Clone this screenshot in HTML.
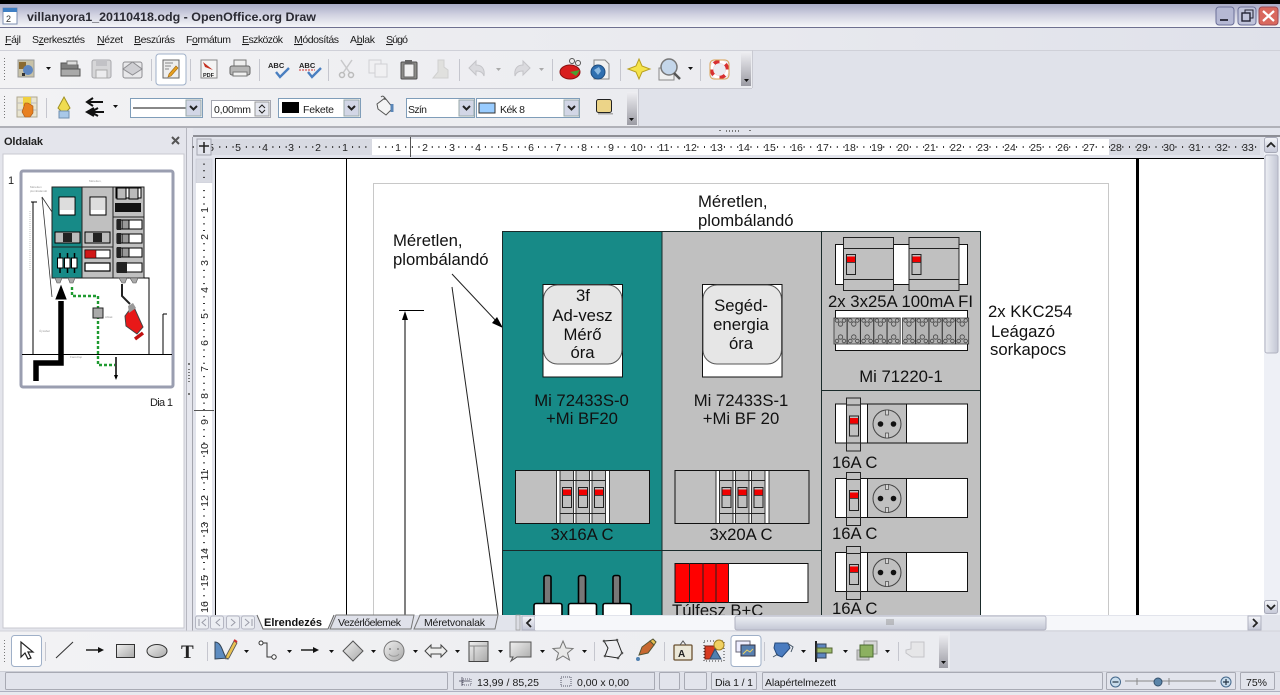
<!DOCTYPE html>
<html lang="hu">
<head>
<meta charset="utf-8">
<title>villanyora1_20110418.odg - OpenOffice.org Draw</title>
<style>
html,body{margin:0;padding:0;background:#e0e2ea;width:1280px;height:695px;overflow:hidden}
svg{display:block;position:absolute;left:0;top:0;filter:blur(.35px)}
text{font-family:"Liberation Sans",sans-serif}
.ui{font-size:10.5px;fill:#1a1a1a}
.r{font-size:10.5px;fill:#222;text-anchor:middle}
.d{font-size:16.7px;fill:#111}
.m{text-anchor:middle}
</style>
</head>
<body>
<svg width="1280" height="695" viewBox="0 0 1280 695" xmlns="http://www.w3.org/2000/svg">
<defs>
<linearGradient id="tb" x1="0" y1="0" x2="0" y2="1"><stop offset="0" stop-color="#a8aac6"/><stop offset=".45" stop-color="#cfd0e0"/><stop offset="1" stop-color="#f6f6f9"/></linearGradient>
<linearGradient id="mn" x1="0" y1="0" x2="1" y2="0"><stop offset="0" stop-color="#f1f1f3"/><stop offset=".6" stop-color="#e8e9ee"/><stop offset="1" stop-color="#dfe1ea"/></linearGradient>
<linearGradient id="tl" x1="0" y1="0" x2="1" y2="0"><stop offset="0" stop-color="#f2f2f4"/><stop offset="1" stop-color="#ebecf0"/></linearGradient>
<linearGradient id="grip" x1="0" y1="0" x2="0" y2="1"><stop offset="0" stop-color="#eeeef2"/><stop offset="1" stop-color="#9c9ca4"/></linearGradient>
<linearGradient id="btn" x1="0" y1="0" x2="0" y2="1"><stop offset="0" stop-color="#f4f5f9"/><stop offset="1" stop-color="#c4c7d6"/></linearGradient>
<linearGradient id="sc" x1="0" y1="0" x2="0" y2="1"><stop offset="0" stop-color="#eef0f5"/><stop offset="1" stop-color="#c3c6d4"/></linearGradient>
<linearGradient id="scv" x1="0" y1="0" x2="1" y2="0"><stop offset="0" stop-color="#eef0f5"/><stop offset="1" stop-color="#c3c6d4"/></linearGradient>
<linearGradient id="gr" x1="0" y1="0" x2="1" y2="1"><stop offset="0" stop-color="#f0f0f0"/><stop offset="1" stop-color="#a8a8a8"/></linearGradient>
<clipPath id="cv"><rect x="216" y="159" width="1048" height="456"/></clipPath>
<g id="dd"><path d="M0 0h5l-2.5 3z" fill="#111"/></g>
<g id="ddg"><path d="M0 0h5l-2.5 3z" fill="#aaa"/></g>
<g id="hdl" fill="#777"><rect y="0" width="1" height="1"/><rect y="3" width="1" height="1"/><rect y="6" width="1" height="1"/><rect y="9" width="1" height="1"/><rect y="12" width="1" height="1"/><rect y="15" width="1" height="1"/><rect y="18" width="1" height="1"/><rect y="21" width="1" height="1"/></g>
<g id="module">
 <rect x="0" y="0" width="13" height="26" fill="#b4b4b4" stroke="#333" stroke-width=".8"/>
 <g fill="none" stroke="#444" stroke-width=".8"><circle cx="6.5" cy="6" r="2.2"/><circle cx="3" cy="2.5" r="1.8"/><circle cx="10" cy="2.5" r="1.8"/><circle cx="6.5" cy="19" r="2.2"/><circle cx="3" cy="23" r="1.8"/><circle cx="10" cy="23" r="1.8"/></g>
</g>
<g id="sw">
 <rect x="0" y="0" width="9" height="20" fill="#c0c0c0" stroke="#222" stroke-width="1"/>
 <rect x=".5" y="2" width="8" height="5.5" fill="#f00000"/>
 <line x1="0" y1="8" x2="9" y2="8" stroke="#222" stroke-width=".8"/>
</g>
<g id="brk3">
 <rect x="0" y="0" width="134" height="53" fill="#c0c0c0" stroke="#111" stroke-width="1"/>
 <rect x="41.5" y=".5" width="3" height="52" fill="#fff"/>
 <rect x="58" y=".5" width="2.5" height="52" fill="#fff"/>
 <rect x="74" y=".5" width="2.5" height="52" fill="#fff"/>
 <rect x="90" y=".5" width="4" height="52" fill="#fff"/>
 <g stroke="#222" stroke-width=".9">
  <line x1="41" y1="0" x2="41" y2="53"/><line x1="44.5" y1="0" x2="44.5" y2="53"/><line x1="58" y1="0" x2="58" y2="53"/><line x1="60.5" y1="0" x2="60.5" y2="53"/><line x1="74" y1="0" x2="74" y2="53"/><line x1="76.5" y1="0" x2="76.5" y2="53"/><line x1="90" y1="0" x2="90" y2="53"/><line x1="94" y1="0" x2="94" y2="53"/>
  <line x1="45" y1="10" x2="90" y2="10"/><line x1="45" y1="43" x2="90" y2="43"/>
 </g>
 <use href="#sw" x="47" y="17"/><use href="#sw" x="63" y="17"/><use href="#sw" x="79" y="17"/>
</g>
<g id="sock">
 <rect x="0" y="0" width="132" height="39" fill="#fff" stroke="#111" stroke-width="1"/>
 <rect x="32" y=".5" width="39" height="38" fill="#c0c0c0"/>
 <line x1="32" y1="0" x2="32" y2="39" stroke="#111"/><line x1="71" y1="0" x2="71" y2="39" stroke="#111"/>
 <circle cx="51.5" cy="20" r="14" fill="none" stroke="#444" stroke-width="1"/>
 <circle cx="45" cy="20" r="2.8" fill="#111"/><circle cx="58" cy="20" r="2.8" fill="#111"/>
 <rect x="50" y="6" width="3" height="5" fill="#d4d4d4" stroke="#444" stroke-width=".7"/><rect x="50" y="29" width="3" height="5" fill="#d4d4d4" stroke="#444" stroke-width=".7"/>
 <rect x="11" y="-6" width="14" height="53" fill="#c0c0c0" stroke="#222" stroke-width="1"/>
 <line x1="11" y1="1" x2="25" y2="1" stroke="#222"/><line x1="11" y1="39" x2="25" y2="39" stroke="#222"/>
 <use href="#sw" x="14" y="12"/>
</g>
<g id="fuse">
 <rect x="10" y="0" width="7" height="30" rx="2" fill="#777" stroke="#000" stroke-width="1.6"/>
 <rect x="0" y="28" width="28" height="50" rx="2" fill="#fff" stroke="#000" stroke-width="1.6"/>
</g>
<g id="rbrk">
 <rect x="0" y="0" width="50" height="53" fill="#c0c0c0" stroke="#222" stroke-width="1"/>
 <line x1="0" y1="11" x2="50" y2="11" stroke="#222"/><line x1="0" y1="42" x2="50" y2="42" stroke="#222"/>
 <use href="#sw" x="3" y="17"/>
</g>
<g id="tbtn"><rect width="30" height="31" rx="3" fill="#fff" stroke="#9fb0c8" stroke-width="1"/></g>
<g id="navb"><rect width="13" height="13" rx="2" fill="#eceef3" stroke="#b4b6c2"/></g>
</defs>

<!-- base -->
<rect width="1280" height="695" fill="#e0e2ea"/>
<rect width="1280" height="4" fill="#000"/>
<!-- title bar -->
<rect y="4" width="1280" height="23" fill="url(#tb)"/>
<rect y="27" width="1280" height="1" fill="#6e7090"/>
<rect x="3" y="8" width="14" height="16" fill="#fff" stroke="#7d8fb0"/><rect x="3" y="8" width="14" height="4" fill="#3f7fc4"/>
<text x="6" y="22" font-size="9" fill="#333">2</text>
<text x="27" y="21" font-size="12" font-weight="bold" fill="#2a2a33" textLength="289" lengthAdjust="spacingAndGlyphs">villanyora1_20110418.odg - OpenOffice.org Draw</text>
<!-- window buttons -->
<rect x="1216" y="7" width="18" height="18" rx="3" fill="#b5b8d4" stroke="#6c7099"/><rect x="1220" y="19" width="8" height="2" fill="#334"/>
<rect x="1238" y="7" width="18" height="18" rx="3" fill="#c0c3da" stroke="#6c7099"/><rect x="1245" y="10" width="8" height="8" fill="none" stroke="#223"/><rect x="1242" y="13" width="8" height="8" fill="#c0c3da" stroke="#223" stroke-width="1.4"/>
<rect x="1259" y="7" width="19" height="18" rx="3" fill="#d9685e" stroke="#9c4a55"/><path d="M1263 11l11 10M1274 11l-11 10" stroke="#fff" stroke-width="2.2"/>
<!-- menu -->
<rect y="28" width="1280" height="22" fill="url(#mn)"/>
<g class="ui">
<text class="ui" x="5" y="43" textLength="16"><tspan text-decoration="underline">F</tspan>ájl</text>
<text class="ui" x="32" y="43" textLength="53">S<tspan text-decoration="underline">z</tspan>erkesztés</text>
<text class="ui" x="97" y="43" textLength="26"><tspan text-decoration="underline">N</tspan>ézet</text>
<text class="ui" x="134" y="43" textLength="41"><tspan text-decoration="underline">B</tspan>eszúrás</text>
<text class="ui" x="186" y="43" textLength="45">F<tspan text-decoration="underline">o</tspan>rmátum</text>
<text class="ui" x="242" y="43" textLength="41"><tspan text-decoration="underline">E</tspan>szközök</text>
<text class="ui" x="294" y="43" textLength="45"><tspan text-decoration="underline">M</tspan>ódosítás</text>
<text class="ui" x="350" y="43" textLength="25">A<tspan text-decoration="underline">b</tspan>lak</text>
<text class="ui" x="386" y="43" textLength="22"><tspan text-decoration="underline">S</tspan>úgó</text>
</g>
<!-- toolbar 1 -->
<rect y="50" width="752" height="38" fill="url(#tl)"/>
<rect y="50" width="1280" height="1" fill="#cfd0d8"/>
<rect y="88" width="752" height="1" fill="#c9cad2"/>
<rect x="752" y="50" width="1" height="38" fill="#c9cad2"/>
<use href="#hdl" x="4" y="58"/>
<!-- new -->
<rect x="18" y="60" width="16" height="17" fill="#c8c2a8" stroke="#999"/><rect x="19" y="62" width="7" height="7" fill="#8a6a30"/><circle cx="28" cy="70" r="5" fill="#5d86c0"/><rect x="22" y="73" width="3" height="3" fill="#333"/>
<use href="#dd" x="46" y="67"/>
<!-- open -->
<path d="M61 75V63h7l2 2h8v10z" fill="#7f7f7f" stroke="#555"/><rect x="61" y="69" width="19" height="7" fill="#a9a9a9" stroke="#555"/><rect x="67" y="61" width="10" height="4" fill="#ddd" stroke="#777"/>
<!-- save -->
<rect x="92" y="60" width="19" height="18" rx="2" fill="#d6d6d8" stroke="#a8a8ac"/><rect x="96" y="70" width="11" height="8" fill="#ececee" stroke="#aaa"/><rect x="96" y="60" width="11" height="6" fill="#c2c2c6"/>
<!-- mail -->
<rect x="123" y="62" width="19" height="16" rx="2" fill="#e8e8ea" stroke="#8e8e92"/><path d="M123 69l9.500-7 9.500 7-9.500 6z" fill="#cfcfd3" stroke="#8e8e92"/>
<rect x="151" y="59" width="1" height="22" fill="#c5c6ce"/>
<use href="#tbtn" x="156" y="54"/>
<rect x="163" y="60" width="16" height="18" fill="#eee" stroke="#666"/><path d="M165 63h8M165 66h6M165 69h4" stroke="#888"/><path d="M169 74l7-8 2 2-7 8-3 1z" fill="#e8a020" stroke="#a06a10" stroke-width=".6"/>
<rect x="190" y="59" width="1" height="22" fill="#c5c6ce"/>
<!-- pdf -->
<rect x="201" y="60" width="16" height="18" fill="#f4f4f4" stroke="#888"/><path d="M203 62l10 8-8-3z" fill="#c43020"/><text x="203" y="77" font-size="5.500" font-weight="bold" fill="#222">PDF</text>
<!-- print -->
<rect x="234" y="60" width="12" height="7" fill="#eee" stroke="#777"/><rect x="230" y="66" width="20" height="9" rx="2" fill="#b5b5b5" stroke="#666"/><rect x="233" y="72" width="14" height="4" fill="#f0f0f0" stroke="#777"/>
<rect x="259" y="59" width="1" height="22" fill="#c5c6ce"/>
<!-- spell -->
<text x="268" y="68" font-size="7.500" font-weight="bold" fill="#222">ABC</text><path d="M276 72l4 5 9-9" fill="none" stroke="#4a7fc0" stroke-width="2.400"/>
<text x="299" y="68" font-size="7.500" font-weight="bold" fill="#222">ABC</text><path d="M299 70h16" stroke="#d03030" stroke-dasharray="2 1"/><path d="M308 72l4 5 9-9" fill="none" stroke="#4a7fc0" stroke-width="2.400"/>
<rect x="328" y="59" width="1" height="22" fill="#c5c6ce"/>
<!-- cut -->
<path d="M352 60l-9 13M341 60l9 13" stroke="#c8c8ca" stroke-width="1.500"/><circle cx="342" cy="75" r="2.500" fill="none" stroke="#bbb" stroke-width="1.500"/><circle cx="351" cy="75" r="2.500" fill="none" stroke="#bbb" stroke-width="1.500"/>
<!-- copy -->
<rect x="369" y="60" width="12" height="13" fill="#f0f0f2" stroke="#d0d0d4"/><rect x="375" y="64" width="12" height="13" fill="#f0f0f2" stroke="#d0d0d4"/>
<!-- paste -->
<rect x="401" y="62" width="16" height="17" rx="1" fill="#8c8c88" stroke="#4e4e4e"/><rect x="404" y="64" width="10" height="13" fill="#f0f0f0" stroke="#666"/><rect x="405" y="60" width="7" height="4" fill="#666"/>
<!-- brush -->
<path d="M438 60h6v7l4 3v8h-15l5-6z" fill="#e0e0de" stroke="#d0d0d0"/>
<rect x="459" y="59" width="1" height="22" fill="#c5c6ce"/>
<!-- undo redo -->
<path d="M469 68l7-7v4c6 0 9 4 8 11-1-4-4-5-8-5v4z" fill="#dadade" stroke="#c4c4c8"/>
<use href="#ddg" x="496" y="68"/>
<path d="M530 68l-7-7v4c-6 0-9 4-8 11 1-4 4-5 8-5v4z" fill="#dadade" stroke="#c4c4c8"/>
<use href="#ddg" x="539" y="68"/>
<rect x="552" y="59" width="1" height="22" fill="#c5c6ce"/>
<!-- chart -->
<ellipse cx="570" cy="72" rx="10" ry="7" fill="#d81e1e" stroke="#8a1010"/><path d="M570 72l10-2-4 6z" fill="#4aa030"/><circle cx="572" cy="61" r="2.500" fill="#eee" stroke="#555"/><circle cx="578" cy="63" r="2.500" fill="#eee" stroke="#555"/>
<!-- globe page -->
<path d="M594 60h11l4 4v15h-15z" fill="#f0f0f0" stroke="#888"/><circle cx="598" cy="72" r="7" fill="#2f6fb0" stroke="#1c4a7c"/><path d="M594 70l5-3 2 4-3 4z" fill="#8ab8e0"/>
<rect x="620" y="59" width="1" height="22" fill="#c5c6ce"/>
<!-- star -->
<path d="M639 59l3 7 8 3-8 3-3 7-3-7-8-3 8-3z" fill="#f5e34a" stroke="#b8a020"/>
<!-- find -->
<rect x="659" y="68" width="15" height="12" fill="#f0f0f0" stroke="#888"/><circle cx="669" cy="67" r="8" fill="#c4d6ea" stroke="#777" stroke-width="1.500"/><path d="M674 73l6 6" stroke="#555" stroke-width="2.500"/>
<use href="#dd" x="688" y="67"/>
<rect x="700" y="59" width="1" height="22" fill="#c5c6ce"/>
<!-- help -->
<circle cx="719.500" cy="69.500" r="8" fill="none" stroke="#d83030" stroke-width="3.500"/><circle cx="719.500" cy="69.500" r="8" fill="none" stroke="#fff" stroke-width="3.500" stroke-dasharray="6.500 6"/><rect x="710" y="60" width="19" height="19" rx="4" fill="none" stroke="#d8a050"/>
<rect x="741" y="52" width="10" height="34" fill="url(#grip)"/><path d="M744 79h5l-2.500 3z" fill="#111"/>
<!-- toolbar 2 -->
<rect y="89" width="638" height="37" fill="url(#tl)"/>
<rect x="638" y="89" width="1" height="37" fill="#c9cad2"/>
<use href="#hdl" x="4" y="96"/>
<rect x="17" y="97" width="20" height="20" fill="#e8e4d0" stroke="#b0a890"/><path d="M17 103h20M17 110h20M24 97v20M31 97v20" stroke="#bbb"/><rect x="23" y="97" width="8" height="9" fill="#f0d040"/><path d="M25 103h3l5 3v7l-3 4h-5l-3-5z" fill="#e88020" stroke="#a05010" stroke-width=".6"/>
<rect x="46" y="98" width="1" height="20" fill="#c5c6ce"/>
<path d="M64 97l6 11-3 3h-6l-3-3z" fill="#f0dc50" stroke="#a09020"/><rect x="59" y="111" width="10" height="7" fill="#a8c8e8" stroke="#7090b0"/>
<path d="M103 102H88m5-4l-6 4 6 4" fill="none" stroke="#111" stroke-width="2"/><path d="M104 112H88m6-4l-7 4 7 4m4-8l-7 4 7 4" fill="none" stroke="#111" stroke-width="2"/>
<use href="#dd" x="113" y="105"/>
<rect x="130.500" y="98.500" width="72" height="19" fill="#fff" stroke="#7f9db9"/><line x1="133" y1="108" x2="186" y2="108" stroke="#111"/><rect x="186" y="100" width="15" height="16" fill="#d2d6e6" stroke="#9aa"/><path d="M190 106l3.500 3.500 3.500-3.500" fill="none" stroke="#222" stroke-width="2"/>
<rect x="211.500" y="100.500" width="59" height="17" fill="#fff" stroke="#a4a6b0"/><text class="ui" x="214" y="113" textLength="37">0,00mm</text><rect x="255" y="102" width="14" height="14" fill="#e4e6ee" stroke="#999"/><path d="M259 108l3-3 3 3M259 110l3 3 3-3" fill="none" stroke="#222"/>
<rect x="278.500" y="98.500" width="82" height="19" fill="#fff" stroke="#7f9db9"/><rect x="282" y="102" width="17" height="11" fill="#000"/><text class="ui" x="303" y="113" textLength="31">Fekete</text><rect x="344" y="100" width="15" height="16" fill="#d2d6e6" stroke="#9aa"/><path d="M348 106l3.500 3.500 3.500-3.500" fill="none" stroke="#222" stroke-width="2"/>
<!-- bucket -->
<path d="M377 104l8-6 8 10-7 7-8-6z" fill="#f4f4f4" stroke="#555"/><path d="M392 104v8" stroke="#5a86b8" stroke-width="3"/><path d="M381 97c2-2 4 0 4 3" fill="none" stroke="#555"/>
<rect x="406.500" y="98.500" width="68" height="19" fill="#fff" stroke="#7f9db9"/><text class="ui" x="408" y="113" textLength="19">Szín</text><rect x="459" y="100" width="15" height="16" fill="#d2d6e6" stroke="#9aa"/><path d="M463 106l3.500 3.500 3.500-3.500" fill="none" stroke="#222" stroke-width="2"/>
<rect x="476.500" y="98.500" width="103" height="19" fill="#fff" stroke="#7f9db9"/><rect x="479" y="103" width="16" height="10" fill="#99ccff" stroke="#333"/><text class="ui" x="500" y="113" textLength="25">Kék 8</text><rect x="564" y="100" width="15" height="16" fill="#d2d6e6" stroke="#9aa"/><path d="M568 106l3.500 3.500 3.500-3.500" fill="none" stroke="#222" stroke-width="2"/>
<rect x="596.500" y="99.500" width="15" height="13" rx="2" fill="#ecd488" stroke="#222"/><rect x="598" y="113" width="15" height="1.500" fill="#aaa"/>
<rect x="627" y="92" width="10" height="33" fill="url(#grip)"/><path d="M629 118h5l-2.500 3z" fill="#111"/>
<!-- separator -->
<rect y="126" width="1280" height="2" fill="#b0b1b8"/>
<rect y="128" width="1280" height="7" fill="#e2e4ec"/>
<rect y="135" width="1280" height="2" fill="#8e8f96"/>
<g fill="#777"><rect x="719" y="130" width="2" height="1"/><rect x="726" y="130" width="1" height="2"/><rect x="729" y="130" width="1" height="2"/><rect x="732" y="130" width="1" height="2"/><rect x="735" y="130" width="1" height="2"/><rect x="738" y="130" width="1" height="2"/><rect x="749" y="130" width="2" height="1"/></g>

<!-- sidebar -->
<rect x="0" y="128" width="186" height="503" fill="#e4e5ec"/>
<text x="4" y="145" font-size="11" font-weight="bold" fill="#222" textLength="39">Oldalak</text>
<path d="M172 137l7 7M179 137l-7 7" stroke="#555" stroke-width="2"/>
<rect x="3" y="154" width="181" height="474" fill="#fff" stroke="#c8c9d0"/>
<text x="8" y="184" font-size="11" fill="#222">1</text>
<rect x="21" y="171" width="152" height="216" rx="2" fill="#fff" stroke="#9a9eb0" stroke-width="3"/>
<!-- thumbnail -->
<g>
<rect x="52" y="187" width="30" height="91" fill="#178a87" stroke="#222"/>
<rect x="82" y="187" width="31" height="91" fill="#c0c0c0" stroke="#222"/>
<rect x="113" y="187" width="31" height="91" fill="#c0c0c0" stroke="#222"/>
<path d="M52 247h61M113 217h31" stroke="#222"/>
<rect x="59" y="197" width="16" height="18" fill="#fff" stroke="#000"/><rect x="60" y="198" width="14" height="12" fill="#ddd"/>
<rect x="90" y="197" width="16" height="18" fill="#fff" stroke="#000"/><rect x="91" y="198" width="14" height="12" fill="#ddd"/>
<rect x="55" y="232" width="25" height="11" fill="#bbb" stroke="#000"/><rect x="63" y="233" width="9" height="9" fill="#222"/>
<rect x="85" y="232" width="25" height="11" fill="#bbb" stroke="#000"/><rect x="93" y="233" width="9" height="9" fill="#222"/>
<path d="M60 253v20M67.500 253v20M74.500 253v20" stroke="#000" stroke-width="1.500"/>
<g fill="#fff" stroke="#000"><rect x="57.500" y="258" width="5.500" height="10"/><rect x="64.500" y="258" width="5.500" height="10"/><rect x="71.500" y="258" width="5.500" height="10"/></g>
<rect x="85" y="250" width="25" height="8" fill="#fff" stroke="#000"/><rect x="85" y="250" width="11" height="8" fill="#d01818" stroke="#000" stroke-width=".5"/>
<rect x="85" y="263" width="25" height="8" fill="#fff" stroke="#000" stroke-width="1.200"/>
<rect x="116" y="188" width="25" height="10" fill="#fff" stroke="#000"/><rect x="117" y="188" width="9" height="11" fill="#bbb" stroke="#000"/><rect x="129" y="188" width="9" height="11" fill="#bbb" stroke="#000"/>
<rect x="115" y="203" width="26" height="9" fill="#111"/>
<g id="trow"><rect x="117" y="220" width="25" height="9" fill="#fff" stroke="#000"/><rect x="117" y="219" width="4" height="11" fill="#222"/><rect x="122" y="220" width="7" height="9" fill="#999" stroke="#000"/></g>
<use href="#trow" y="14"/><use href="#trow" y="28"/>
<rect x="117" y="263" width="25" height="9" fill="#fff" stroke="#000"/><rect x="117" y="262" width="10" height="11" fill="#222"/>
<path d="M55 278h7l-2 5h-3zM68 278h7l-2 5h-3zM119 278h8l-2 5h-3zM130 278h8l-2 5h-3z" fill="#aaa" stroke="#555" stroke-width=".6"/>
<path d="M144 278h5v76M33 202v152M22 354.500h150M163 314v40M163 314h4M31 202h6" fill="none" stroke="#000"/>
<path d="M42 197l10 15M42 197l10 100" stroke="#333" stroke-width=".8" fill="none"/>
<path d="M36 381v-18h25v-62" fill="none" stroke="#000" stroke-width="5.500"/><path d="M61 286l-5 13h10z" fill="#000" stroke="#000"/>
<path d="M72 287v9h26v69h17" fill="none" stroke="#1f9a30" stroke-width="2.400" stroke-dasharray="3 2"/>
<rect x="93" y="308" width="10" height="10" fill="#aaa" stroke="#222"/>
<path d="M116 357v21" stroke="#000" stroke-width="1.500"/><path d="M114 375h4l-2 5z" fill="#000"/>
<path d="M122 284v12l8 8" fill="none" stroke="#222" stroke-width="2"/>
<path d="M125 316l8-11 10 22-6 7-11-8z" fill="#e81818" stroke="#444"/><path d="M128 306l5-3 3 5-7 5z" fill="#999"/><path d="M135 339l8-6" stroke="#c01010" stroke-width="3.500"/>
<g fill="#999" font-size="3"><text x="30" y="188">Méretlen</text><text x="30" y="192">plombálandó</text><text x="89" y="182">Méretlen,</text><text x="39" y="332">Új kábel</text><text x="70" y="358">Faoszlop</text><text x="105" y="318">Ablak</text></g>
<path d="M31 270v-60" stroke="#bbb" stroke-dasharray="1 1" transform="translate(-1,0)"/>
</g>
<text x="150" y="406" font-size="11" fill="#222" textLength="23">Dia 1</text>
<!-- splitter -->
<rect x="186" y="128" width="7" height="503" fill="#e6e7ee"/>
<rect x="186" y="128" width="1" height="503" fill="#b6b7c0"/><rect x="192" y="137" width="1" height="494" fill="#a4a5ae"/>
<g fill="#777"><rect x="188" y="363" width="2" height="2"/><rect x="188" y="369" width="2" height="1"/><rect x="188" y="372" width="2" height="1"/><rect x="188" y="375" width="2" height="1"/><rect x="188" y="378" width="2" height="1"/><rect x="188" y="381" width="2" height="1"/><rect x="188" y="393" width="2" height="2"/></g>

<!-- drawing area base -->
<rect x="193" y="137" width="1087" height="494" fill="#e2e4ec"/>
<rect x="216" y="158" width="1048" height="457" fill="#fff"/>

<!-- hor ruler -->
<rect x="205" y="139" width="167" height="16" fill="#d8dae2"/><rect x="372" y="139" width="737" height="16" fill="#fff"/><rect x="1109" y="139" width="151" height="16" fill="#d8dae2"/>
<line x1="192.720" y1="147" x2="1260" y2="147" stroke="#333" stroke-width="2" stroke-dasharray="1 5.640 1 5.640 1 12.280"/>
<g>
<text class="r" x="211" y="151">5</text><text class="r" x="238" y="151">5</text><text class="r" x="265" y="151">4</text><text class="r" x="291" y="151">3</text><text class="r" x="318" y="151">2</text><text class="r" x="345" y="151">1</text>
<text class="r" x="398" y="151">1</text><text class="r" x="425" y="151">2</text><text class="r" x="452" y="151">3</text><text class="r" x="478" y="151">4</text><text class="r" x="505" y="151">5</text><text class="r" x="531" y="151">6</text><text class="r" x="558" y="151">7</text><text class="r" x="584" y="151">8</text><text class="r" x="611" y="151">9</text><text class="r" x="637" y="151">10</text><text class="r" x="664" y="151">11</text><text class="r" x="691" y="151">12</text><text class="r" x="717" y="151">13</text><text class="r" x="744" y="151">14</text><text class="r" x="770" y="151">15</text><text class="r" x="797" y="151">16</text><text class="r" x="823" y="151">17</text><text class="r" x="850" y="151">18</text><text class="r" x="877" y="151">19</text><text class="r" x="903" y="151">20</text><text class="r" x="930" y="151">21</text><text class="r" x="956" y="151">22</text><text class="r" x="983" y="151">23</text><text class="r" x="1010" y="151">24</text><text class="r" x="1036" y="151">25</text><text class="r" x="1063" y="151">26</text><text class="r" x="1089" y="151">27</text><text class="r" x="1116" y="151">28</text><text class="r" x="1142" y="151">29</text><text class="r" x="1169" y="151">30</text><text class="r" x="1195" y="151">31</text><text class="r" x="1222" y="151">32</text><text class="r" x="1248" y="151">33</text>
</g>
<rect x="197" y="139" width="14" height="16" fill="#e2e4ec" stroke="#a4a6b0"/><path d="M199 146h10M204 142v11" stroke="#222" stroke-width="1.500"/>
<rect x="410" y="137" width="1" height="20" fill="#555"/>
<!-- vert ruler -->
<rect x="196" y="159" width="16" height="24" fill="#d8dae2" stroke="#c4c6d0" stroke-width=".5"/><rect x="196" y="183" width="16" height="432" fill="#fff"/>
<line x1="204" y1="163.600" x2="204" y2="614" stroke="#333" stroke-width="2" stroke-dasharray="1 5.640 1 5.640 1 12.280"/>
<g>
<text class="r" transform="rotate(-90 208 210)" x="208" y="210">1</text><text class="r" transform="rotate(-90 208 237)" x="208" y="237">2</text><text class="r" transform="rotate(-90 208 263)" x="208" y="263">3</text><text class="r" transform="rotate(-90 208 290)" x="208" y="290">4</text><text class="r" transform="rotate(-90 208 316)" x="208" y="316">5</text><text class="r" transform="rotate(-90 208 343)" x="208" y="343">6</text><text class="r" transform="rotate(-90 208 369)" x="208" y="369">7</text><text class="r" transform="rotate(-90 208 396)" x="208" y="396">8</text><text class="r" transform="rotate(-90 208 422)" x="208" y="422">9</text><text class="r" transform="rotate(-90 208 449)" x="208" y="449">10</text><text class="r" transform="rotate(-90 208 475)" x="208" y="475">11</text><text class="r" transform="rotate(-90 208 501)" x="208" y="501">12</text><text class="r" transform="rotate(-90 208 528)" x="208" y="528">13</text><text class="r" transform="rotate(-90 208 554)" x="208" y="554">14</text><text class="r" transform="rotate(-90 208 581)" x="208" y="581">15</text><text class="r" transform="rotate(-90 208 607)" x="208" y="607">16</text>
</g>
<rect x="194" y="410" width="20" height="1" fill="#555"/>

<!-- canvas -->
<rect x="215" y="158" width="1049" height="1" fill="#000"/>
<rect x="215" y="158" width="1" height="457" fill="#000"/>
<g clip-path="url(#cv)">
<rect x="346" y="158" width="1" height="457" fill="#000"/>
<rect x="1136" y="158" width="3" height="457" fill="#000"/>
<rect x="373.500" y="183.500" width="735" height="440" fill="none" stroke="#c8c8c8" stroke-width="1"/>
<text class="d" x="698" y="207">Méretlen,</text><text class="d" x="698" y="226">plombálandó</text>
<text class="d" x="393" y="246">Méretlen,</text><text class="d" x="393" y="265">plombálandó</text>
<path d="M452 274l46 49" stroke="#222" stroke-width="1"/><path d="M503 328l-11-5 5-6z" fill="#000"/>
<path d="M452 287l47 335" stroke="#222" stroke-width="1"/>
<path d="M399 310.500h25M405 315v300" stroke="#000"/><path d="M405 311l-3 9h6z" fill="#000"/>

<rect x="503" y="231.500" width="159" height="400" fill="#178a87"/>
<rect x="662" y="231.500" width="159" height="400" fill="#c0c0c0"/>
<rect x="821.500" y="231.500" width="159" height="400" fill="#c0c0c0"/>
<path d="M502.500 231v390M662 231v390M821.500 231v390M980.500 231v390M502 231.500h479M502 550.500h319M821 390.500h160" stroke="#1a2a2a" stroke-width="1" fill="none"/>

<!-- meters -->
<rect x="543" y="284.500" width="79.500" height="92.500" fill="#fff" stroke="#111"/>
<rect x="543.500" y="285" width="78.500" height="79" rx="14" fill="#e6e6e6" stroke="#555"/>
<text class="d m" x="583" y="301">3f</text><text class="d m" x="582.500" y="321">Ad-vesz</text><text class="d m" x="582.500" y="340">Mérő</text><text class="d m" x="582.500" y="358">óra</text>
<rect x="702.500" y="284.500" width="79.500" height="92.500" fill="#fff" stroke="#111"/>
<rect x="703" y="285" width="78.500" height="79" rx="14" fill="#e6e6e6" stroke="#555"/>
<text class="d m" x="741" y="311">Segéd-</text><text class="d m" x="741" y="330">energia</text><text class="d m" x="741" y="349">óra</text>
<text class="d m" x="581.500" y="406">Mi 72433S-0</text><text class="d m" x="582" y="424">+Mi BF20</text>
<text class="d m" x="741" y="406">Mi 72433S-1</text><text class="d m" x="741" y="424">+Mi BF 20</text>
<use href="#brk3" x="515.500" y="470.500"/><use href="#brk3" x="675" y="470.500"/>
<text class="d m" x="582" y="540">3x16A C</text><text class="d m" x="741" y="540">3x20A C</text>
<use href="#fuse" x="534" y="575.500"/><use href="#fuse" x="568.500" y="575.500"/><use href="#fuse" x="603" y="575.500"/>
<!-- surge -->
<rect x="675" y="563.500" width="133" height="39" fill="#fff" stroke="#111"/>
<rect x="675.500" y="564" width="53" height="38" fill="#ff0000"/>
<path d="M689.500 563v40M703 563v40M716 563v40M728.500 563v40" stroke="#222" fill="none"/>
<text class="d" x="672" y="616">Túlfesz B+C</text>
<!-- right column -->
<rect x="835.500" y="244.500" width="132" height="40" fill="#fff" stroke="#111"/>
<use href="#rbrk" x="843.500" y="237.500"/><use href="#rbrk" x="909" y="237.500"/>
<text class="d" x="828" y="307" textLength="145">2x 3x25A 100mA FI</text>
<rect x="835.500" y="310.500" width="132" height="40" fill="#fff" stroke="#111"/>
<use href="#module" x="834" y="318"/><use href="#module" x="847.300" y="318"/><use href="#module" x="860.600" y="318"/><use href="#module" x="873.900" y="318"/><use href="#module" x="887.200" y="318"/>
<use href="#module" x="902.500" y="318"/><use href="#module" x="915.800" y="318"/><use href="#module" x="929.100" y="318"/><use href="#module" x="942.400" y="318"/><use href="#module" x="955.700" y="318"/>
<text class="d m" x="901" y="382">Mi 71220-1</text>
<text class="d" x="988" y="317">2x KKC254</text><text class="d" x="991" y="337">Leágazó</text><text class="d" x="990" y="355">sorkapocs</text>
<use href="#sock" x="835.500" y="404"/><use href="#sock" x="835.500" y="478.500"/><use href="#sock" x="835.500" y="552.500"/>
<text class="d" x="832" y="468">16A C</text><text class="d" x="832" y="539">16A C</text><text class="d" x="832" y="614">16A C</text>
</g>

<!-- vertical scrollbar -->
<rect x="1264" y="137" width="16" height="494" fill="#eef0f6"/>
<rect x="1264.500" y="137.500" width="13" height="15" rx="2" fill="url(#btn)" stroke="#a8aab8"/><path d="M1267 147l4-4 4 4" fill="none" stroke="#222" stroke-width="1.800"/>
<rect x="1265" y="155" width="13" height="198" rx="2" fill="url(#scv)" stroke="#b0b2c0"/>
<rect x="1264.500" y="600.500" width="13" height="13" rx="2" fill="url(#btn)" stroke="#a8aab8"/><path d="M1267 605l4 4 4-4" fill="none" stroke="#222" stroke-width="1.800"/>

<!-- tab bar -->
<rect x="193" y="615" width="1087" height="16" fill="#e2e4ec"/>
<use href="#navb" x="195.500" y="616"/><use href="#navb" x="210.500" y="616"/><use href="#navb" x="226.500" y="616"/><use href="#navb" x="241.500" y="616"/>
<path d="M199 619v7M206 619l-4 3.500 4 3.500M220 619l-4 3.500 4 3.500M231 619l4 3.500-4 3.500M245 619l4 3.500-4 3.500M252 619v7" fill="none" stroke="#9a9ca8"/>
<path d="M257 615l6 14h65l6-14" fill="#fff" stroke="#666"/>
<text x="264" y="626" font-size="11" font-weight="bold" fill="#111" textLength="58">Elrendezés</text>
<path d="M330 629l6-14h78l-3 14z" fill="#dfe1ea" stroke="#777"/>
<text class="ui" x="338" y="626" textLength="63">Vezérlőelemek</text>
<path d="M414 629l6-14h78l-3 14z" fill="#dfe1ea" stroke="#777"/>
<text class="ui" x="424" y="626" textLength="61">Méretvonalak</text>
<!-- h scrollbar -->
<rect x="516" y="615" width="4" height="15" fill="#dcdde4" stroke="#999" stroke-width=".7"/>
<rect x="522" y="616" width="13" height="14" fill="url(#btn)" stroke="#b0b2c0"/><path d="M531 619l-4 4 4 4" fill="none" stroke="#222" stroke-width="1.800"/>
<rect x="535" y="616" width="713" height="14" fill="#f6f7fa"/>
<rect x="735" y="616" width="311" height="14" rx="2" fill="url(#sc)" stroke="#b0b2c0"/>
<path d="M887 619v6M889 619v6M891 619v6M893 619v6" stroke="#999"/>
<rect x="1248" y="616" width="13" height="14" fill="url(#btn)" stroke="#b0b2c0"/><path d="M1253 619l4 4-4 4" fill="none" stroke="#222" stroke-width="1.800"/>

<!-- drawing toolbar -->
<rect y="631" width="950" height="40" fill="url(#tl)"/>
<rect y="630.500" width="1280" height="1" fill="#d2d3da"/>
<rect y="671" width="1280" height="1" fill="#ccced6"/>
<use href="#hdl" x="4" y="640"/>
<use href="#tbtn" x="11.500" y="635.500"/>
<path d="M21 642v15l4-4 3 6 3-1-3-6h5z" fill="#fff" stroke="#222" stroke-width="1.200"/>
<rect x="45" y="642" width="1" height="19" fill="#c5c6ce"/>
<path d="M56 658l17-16" stroke="#333"/>
<path d="M86 650h14" stroke="#111" stroke-width="1.400"/><path d="M104 650l-6-3v6z" fill="#111"/>
<rect x="116.500" y="644.500" width="18" height="13" fill="url(#gr)" stroke="#333"/>
<ellipse cx="157" cy="651" rx="10" ry="6.500" fill="url(#gr)" stroke="#333"/>
<text x="181" y="658" font-size="19" font-weight="bold" fill="#222" style="font-family:'Liberation Serif',serif">T</text>
<rect x="207" y="642" width="1" height="19" fill="#c5c6ce"/>
<path d="M215 642c8 0 8 16 13 17v-1l-13 1z" fill="#5d8cc0" stroke="#345"/><path d="M226 656l8-15 3 2-8 15-3 1z" fill="#e8c050" stroke="#555" stroke-width=".8"/><path d="M234 640l3 2" stroke="#d03030" stroke-width="2"/>
<use href="#dd" x="244" y="650"/>
<path d="M261 643h6v14h7" fill="none" stroke="#333"/><circle cx="261" cy="643" r="2" fill="#fff" stroke="#333"/><circle cx="274" cy="657" r="2.200" fill="#fff" stroke="#333"/>
<use href="#dd" x="287" y="650"/>
<path d="M301 650h14" stroke="#111" stroke-width="1.400"/><path d="M319 650l-6-3v6z" fill="#111"/>
<use href="#dd" x="329" y="650"/>
<path d="M353 641l10 10-10 10-10-10z" fill="url(#gr)" stroke="#555"/>
<use href="#dd" x="371" y="650"/>
<circle cx="394" cy="651" r="10" fill="url(#gr)" stroke="#777"/><circle cx="390" cy="649" r="1" fill="#888"/><circle cx="398" cy="649" r="1" fill="#888"/><path d="M389 654c2 3 8 3 10 0" fill="none" stroke="#999"/>
<use href="#dd" x="413" y="650"/>
<path d="M425 651l6-6v3h10v-3l6 6-6 6v-3h-10v3z" fill="#eee" stroke="#444"/>
<use href="#dd" x="455" y="650"/>
<rect x="469" y="641.500" width="19" height="20" fill="url(#gr)" stroke="#444"/><path d="M469 646h19M474 646v15" stroke="#888"/>
<use href="#dd" x="498" y="650"/>
<path d="M510 642h21v15h-14l-6 4 2-4h-3z" fill="url(#gr)" stroke="#555"/>
<use href="#dd" x="540" y="650"/>
<path d="M563 641l3 7 7 .500-5.500 4.500 2 7-6.500-4-6.500 4 2-7-5.500-4.500 7-.500z" fill="#e8e8e8" stroke="#777"/>
<use href="#dd" x="582" y="650"/>
<rect x="594" y="642" width="1" height="19" fill="#c5c6ce"/>
<path d="M604 641l13-1 5 13-4 5-13-2 3-8z" fill="none" stroke="#222"/><g fill="#555"><circle cx="604" cy="641" r="1.300"/><circle cx="617" cy="640" r="1.300"/><circle cx="622" cy="653" r="1.300"/><circle cx="618" cy="658" r="1.300"/><circle cx="605" cy="656" r="1.300"/></g>
<path d="M639 655l3-8 8-6 4 4-6 8z" fill="#c86830" stroke="#553"/><path d="M650 641l3-2 3 3-2 3z" fill="#e8c050" stroke="#553"/><circle cx="638" cy="659" r="2" fill="#5080b0"/>
<rect x="664" y="642" width="1" height="19" fill="#c5c6ce"/>
<rect x="674" y="645" width="18" height="15" rx="1" fill="#ece8d8" stroke="#6a5030" stroke-width="1.300"/><path d="M680 645l3-4 3 4" fill="none" stroke="#555"/><text x="678" y="657" font-size="10" font-weight="bold" fill="#222">A</text>
<rect x="704" y="641" width="20" height="20" fill="none" stroke="#333" stroke-dasharray="1 2"/><rect x="705" y="646" width="11" height="13" fill="#d83a20" stroke="#7a2010"/><circle cx="719" cy="645" r="5" fill="#f0d060" stroke="#a08020"/><path d="M710 659l5-10 6 10z" fill="#5080b0" stroke="#304a6c"/>
<use href="#tbtn" x="731" y="635.500"/>
<rect x="736" y="641" width="14" height="11" fill="#eef" stroke="#667"/><rect x="741" y="645" width="14" height="11" fill="#5880b0" stroke="#334"/><path d="M743 654l4-4 3 2 3-3" stroke="#e8d060" fill="none"/>
<rect x="764" y="642" width="1" height="19" fill="#c5c6ce"/>
<path d="M775 643h13l2 5-8 9-5-2-3-7z" fill="#4a7cc0" stroke="#264a7c"/><path d="M787 643l6 4-2 5M773 657l5-3" stroke="#456" fill="none"/>
<use href="#dd" x="801" y="650"/>
<rect x="815" y="641" width="2" height="21" fill="#222"/><rect x="817" y="644" width="9" height="5" fill="#5d86c0" stroke="#345"/><rect x="817" y="648" width="15" height="5" fill="#9cba6a" stroke="#563"/><rect x="817" y="653" width="9" height="5" fill="#5d86c0" stroke="#345"/>
<use href="#dd" x="843" y="650"/>
<rect x="864" y="641" width="13" height="13" fill="#d8d8d8" stroke="#999"/><rect x="857" y="650" width="12" height="10" fill="#c8c8c8" stroke="#999"/><rect x="860" y="645" width="13" height="12" fill="#8cb060" stroke="#4a6a30"/>
<use href="#dd" x="885" y="650"/>
<rect x="898" y="642" width="1" height="19" fill="#c5c6ce"/>
<path d="M911 642h13v15h-12l-6-4v-3l5-1z" fill="#e6e6e8" stroke="#c4c4c8"/>
<rect x="939" y="634" width="9" height="34" fill="url(#grip)"/><path d="M941 661h5l-2.500 3z" fill="#111"/>

<!-- status bar -->
<rect y="672" width="1280" height="19" fill="#e0e2ea"/>
<g fill="#e2e4ec" stroke="#a8aab4">
<rect x="5.500" y="672.500" width="442" height="17" rx="1"/>
<rect x="659.500" y="672.500" width="20" height="17" rx="1"/>
<rect x="684.500" y="672.500" width="22" height="17" rx="1"/>
<rect x="711.500" y="672.500" width="45" height="17" rx="1"/>
<rect x="762.500" y="672.500" width="340" height="17" rx="1"/>
<rect x="1106.500" y="672.500" width="129" height="17" rx="1"/>
<rect x="1240.500" y="672.500" width="34" height="17" rx="1"/>
</g>
<line x1="453" y1="672.500" x2="655" y2="672.500" stroke="#a8aab4"/><line x1="453" y1="689.500" x2="655" y2="689.500" stroke="#a8aab4"/><line x1="453.500" y1="672" x2="453.500" y2="690" stroke="#a8aab4"/><line x1="654.500" y1="672" x2="654.500" y2="690" stroke="#a8aab4"/>
<path d="M459 681h11M462 677v9" stroke="#667"/><rect x="463" y="679" width="8" height="6" fill="none" stroke="#667" stroke-dasharray="1 1"/>
<text class="ui" x="477" y="686" textLength="62">13,99 / 85,25</text>
<rect x="561" y="677" width="10" height="9" fill="none" stroke="#556" stroke-dasharray="1 1"/>
<text class="ui" x="577" y="686" textLength="52">0,00 x 0,00</text>
<text class="ui" x="715" y="686" textLength="38">Dia 1 / 1</text>
<text class="ui" x="765" y="686" textLength="71">Alapértelmezett</text>
<circle cx="1115.500" cy="682" r="5" fill="#c8dcec" stroke="#44688c"/><path d="M1112.500 682h6" stroke="#234" stroke-width="1.200"/>
<path d="M1125 681h91M1137 678v7M1169 678v7" stroke="#888"/>
<circle cx="1158" cy="682" r="4" fill="#5a84a8" stroke="#34506c"/>
<circle cx="1226" cy="682" r="5" fill="#c8dcec" stroke="#44688c"/><path d="M1223 682h6M1226 679v6" stroke="#234" stroke-width="1.200"/>
<text class="ui" x="1246" y="686" textLength="21">75%</text>
<rect y="691" width="1280" height="1" fill="#aeb0c0"/>
<rect y="692" width="1280" height="3" fill="#e8e9ef"/>
</svg>
</body>
</html>
